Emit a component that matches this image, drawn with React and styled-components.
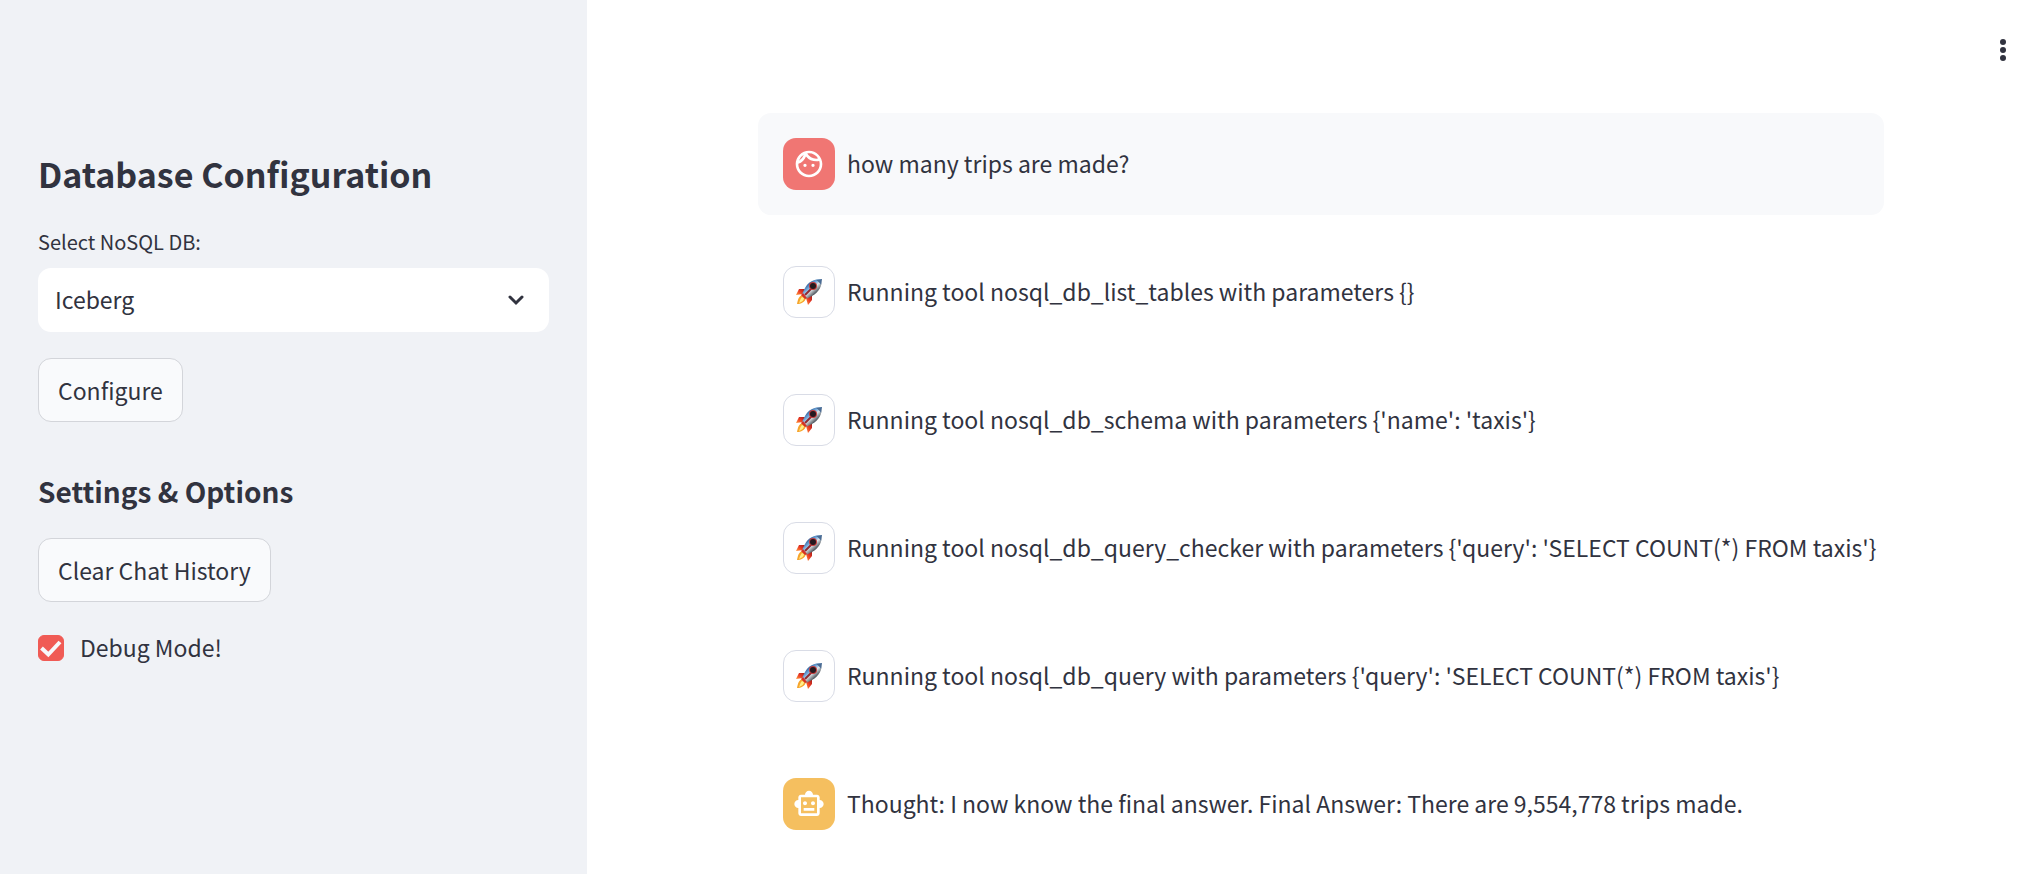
import React, { useState } from 'react';
import styled, { createGlobalStyle } from 'styled-components';
import { MdOutlineFace, MdOutlineSmartToy } from 'react-icons/md';

const GlobalStyle = createGlobalStyle`
  *, *::before, *::after { box-sizing: border-box; }
  body {
    margin: 0;
    background: #ffffff;
    color: #31333f;
    font-family: "Noto Sans CJK SC", "Noto Sans", sans-serif;
    font-size: 23px;
    line-height: 40px;
  }
  button, select, input { font: inherit; color: inherit; margin: 0; }
`;

const Layout = styled.div`
  display: grid;
  grid-template-columns: 587px minmax(0, 1fr);
  min-height: 100vh;
`;

const Sidebar = styled.aside`
  display: flex;
  flex-direction: column;
  align-items: flex-start;
  padding: 152px 38px 40px;
  background: #f0f2f6;
`;

const Title = styled.h1`
  margin: 0 0 28px;
  font-size: 34px;
  line-height: 44px;
  font-weight: 700;
`;

const Subtitle = styled.h2`
  margin: 47px 0 25px;
  font-size: 28px;
  line-height: 44px;
  font-weight: 700;
`;

const FieldLabel = styled.label`
  margin-bottom: 8px;
  font-size: 20px;
  line-height: 36px;
`;

const SelectBox = styled.div`
  display: grid;
  align-items: center;
  width: 100%;
  margin-bottom: 26px;

  > * { grid-area: 1 / 1; }

  > svg {
    justify-self: end;
    margin-right: 24px;
    pointer-events: none;
  }
`;

const Select = styled.select`
  width: 100%;
  height: 64px;
  padding: 0 64px 2px 17px;
  border: 0;
  border-radius: 13px;
  background: #ffffff;
  appearance: none;
`;

const Button = styled.button`
  height: 64px;
  padding: 0 19px 1px;
  border: 1px solid #d3d5da;
  border-radius: 13px;
  background: #f9fafc;
`;

const CheckLabel = styled.label`
  display: flex;
  align-items: center;
  gap: 16px;
  margin-top: 25px;
`;

const CheckText = styled.span`
  padding-bottom: 2px;
`;

const CheckMark = styled.span`
  display: grid;
  > * { grid-area: 1 / 1; }
  > svg { pointer-events: none; }
`;

const Checkbox = styled.input`
  width: 26px;
  height: 26px;
  border: 1px solid #c5c7ce;
  border-radius: 6px;
  appearance: none;

  &:checked {
    border-color: #f05b55;
    background: #f05b55;
  }
`;

const Main = styled.main`
  display: flex;
  flex-direction: column;
`;

const Toolbar = styled.header`
  display: flex;
  justify-content: flex-end;
  height: 113px;
  padding: 30px 17px 0 0;
`;

const MenuButton = styled.button`
  display: grid;
  place-items: center;
  width: 40px;
  height: 40px;
  padding: 0;
  border: 0;
  background: transparent;
`;

const Chat = styled.section`
  display: flex;
  flex-direction: column;
  gap: 26px;
  padding: 0 156px 0 171px;
`;

const Message = styled.article`
  display: flex;
  align-items: center;
  gap: 12px;
  min-height: 102px;
  padding: 25px 0 25px 25px;
  border-radius: 13px;
  background: ${({ $filled }) => ($filled ? '#f8f9fb' : 'transparent')};
`;

const avatarColors = {
  user: '#f07673',
  tool: '#ffffff',
  assistant: '#f5bf5f',
};

const Avatar = styled.div`
  display: grid;
  flex: none;
  place-items: center;
  width: 52px;
  height: 52px;
  border: ${({ $kind }) => ($kind === 'tool' ? '1px solid #d9dce6' : '0')};
  border-radius: 13px;
  background: ${({ $kind }) => avatarColors[$kind]};
  color: #ffffff;
`;

const MessageText = styled.p`
  margin: 0;
  padding-bottom: 2px;
`;

function Rocket() {
  return (
    <svg width="28" height="28" viewBox="0 0 28 28" aria-hidden="true">
      <defs>
        <linearGradient id="hull" x1="10" y1="8" x2="18" y2="17" gradientUnits="userSpaceOnUse">
          <stop offset="0" stopColor="#2d5f9b" />
          <stop offset="0.35" stopColor="#78aee0" />
          <stop offset="0.6" stopColor="#dfe5e8" />
          <stop offset="1" stopColor="#596168" />
        </linearGradient>
        <linearGradient id="fin" x1="0" y1="1" x2="1" y2="0">
          <stop offset="0" stopColor="#ff9d3b" />
          <stop offset="0.5" stopColor="#ec3b25" />
          <stop offset="1" stopColor="#9e1a18" />
        </linearGradient>
      </defs>
      <path d="M10 11 L4 11 L1 17 L8 16 Z" fill="url(#fin)" />
      <path d="M17 17 L17 22 L13 27 L11 20 Z" fill="url(#fin)" />
      <path d="M7 17 C3 19 3 22 2 26 C6 26 10 24 11 20 Z" fill="#f7a52c" />
      <path d="M7 19 C5 21 5 23 4 25 C7 24 9 22 9 20 Z" fill="#fff08a" />
      <path d="M27 1 C19 1 13 4 10 10 L7 16 L11 21 L17 18 C24 14 27 8 27 1 Z" fill="url(#hull)" />
      <path d="M27 1 L21 2 C23 3 25 5 26 7 Z" fill="#496b94" />
      <path d="M8 15 L12 20 L10 21 L6 17 Z" fill="#d43125" />
      <path d="M17 10 L10 17" stroke="#8c2a32" strokeWidth="2" />
      <circle cx="18" cy="8" r="4" fill="#c63a3a" />
      <circle cx="18" cy="8" r="3" fill="#24191f" />
    </svg>
  );
}

const icons = {
  user: <MdOutlineFace size={32} />,
  tool: <Rocket />,
  assistant: <MdOutlineSmartToy size={32} />,
};

const messages = [
  { kind: 'user', text: 'how many trips are made?' },
  { kind: 'tool', text: 'Running tool nosql_db_list_tables with parameters {}' },
  { kind: 'tool', text: "Running tool nosql_db_schema with parameters {'name': 'taxis'}" },
  {
    kind: 'tool',
    text: "Running tool nosql_db_query_checker with parameters {'query': 'SELECT COUNT(*) FROM taxis'}",
  },
  {
    kind: 'tool',
    text: "Running tool nosql_db_query with parameters {'query': 'SELECT COUNT(*) FROM taxis'}",
  },
  {
    kind: 'assistant',
    text: 'Thought: I now know the final answer. Final Answer: There are 9,554,778 trips made.',
  },
];

export default function App() {
  const [debug, setDebug] = useState(true);

  return (
    <>
      <GlobalStyle />
      <Layout>
        <Sidebar>
          <Title>Database Configuration</Title>
          <FieldLabel htmlFor="database">Select NoSQL DB:</FieldLabel>
          <SelectBox>
            <Select id="database" defaultValue="Iceberg">
              <option>Iceberg</option>
            </Select>
            <svg width="18" height="12" viewBox="0 0 18 12" aria-hidden="true">
              <path
                d="M3 3 L9 9 L15 3"
                fill="none"
                stroke="#31333f"
                strokeWidth="3"
                strokeLinecap="round"
              />
            </svg>
          </SelectBox>
          <Button type="button">Configure</Button>
          <Subtitle>Settings &amp; Options</Subtitle>
          <Button type="button">Clear Chat History</Button>
          <CheckLabel>
            <CheckMark>
              <Checkbox
                type="checkbox"
                checked={debug}
                onChange={(event) => setDebug(event.target.checked)}
              />
              {debug && (
                <svg width="26" height="26" viewBox="0 0 26 26" aria-hidden="true">
                  <path d="M3.5 13 L10.3 19.5 L22 7" fill="none" stroke="#f7f8fb" strokeWidth="4" />
                </svg>
              )}
            </CheckMark>
            <CheckText>Debug Mode!</CheckText>
          </CheckLabel>
        </Sidebar>
        <Main>
          <Toolbar>
            <MenuButton type="button" aria-label="Main menu">
              <svg width="6" height="22" viewBox="0 0 6 22" fill="#31333f" aria-hidden="true">
                <circle cx="3" cy="3" r="3" />
                <circle cx="3" cy="11" r="3" />
                <circle cx="3" cy="19" r="3" />
              </svg>
            </MenuButton>
          </Toolbar>
          <Chat>
            {messages.map(({ kind, text }) => (
              <Message key={text} $filled={kind === 'user'}>
                <Avatar $kind={kind}>{icons[kind]}</Avatar>
                <MessageText>{text}</MessageText>
              </Message>
            ))}
          </Chat>
        </Main>
      </Layout>
    </>
  );
}
